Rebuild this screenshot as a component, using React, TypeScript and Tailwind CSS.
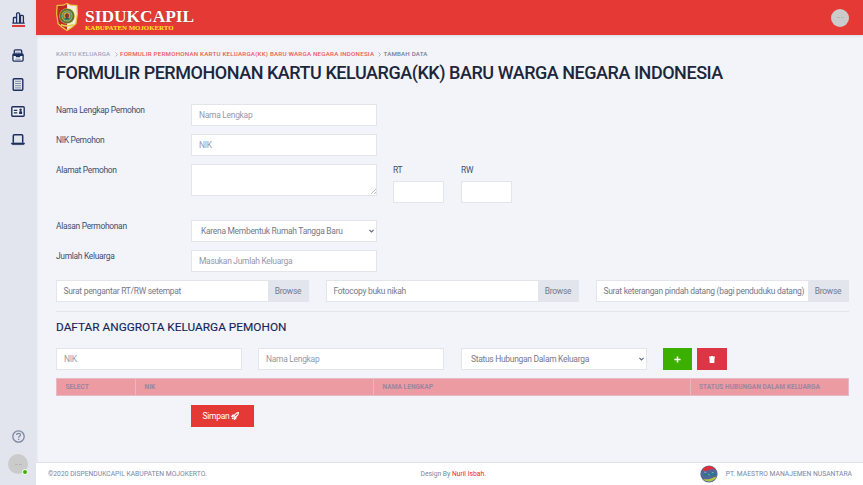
import React from "react";

const field =
  "block h-[22px] w-full appearance-none rounded-none border border-[#e2e5ec] bg-white px-[7px] text-[8.45px] tracking-[-0.28px] leading-[20px] text-[#74788d] outline-none placeholder:text-[#9498aa] placeholder:opacity-100";

function Label({ children }: { children: React.ReactNode }) {
  return <label className="w-[135px] shrink-0 pt-[1px] text-[8.45px] leading-[10px] tracking-[-0.31px] text-[#3f4d70]">{children}</label>;
}

function Select({ text }: { text: string }) {
  return (
    <div className="relative w-[186px] shrink-0">
      <select className={field + " pl-[9px]"} defaultValue={text}>
        <option>{text}</option>
      </select>
      <svg className="absolute right-[3px] top-[9px] h-[4px] w-[5px]" viewBox="0 0 5 4" fill="none" stroke="#5f6579" strokeWidth="1.1">
        <path d="M.4.8 2.5 2.9 4.6.8" />
      </svg>
    </div>
  );
}

function FileField({ text }: { text: string }) {
  return (
    <div className="flex h-[22px] w-[253px] border border-[#e2e5ec] bg-white text-[8.45px] leading-[20px] tracking-[-0.27px] text-[#74788d]">
      <span className="min-w-0 flex-1 whitespace-nowrap pl-[6.5px]">{text}</span>
      <span className="w-[40px] shrink-0 bg-[#e2e5ec] text-center">Browse</span>
    </div>
  );
}

function Crest() {
  return (
    <svg className="h-[30px] w-[24px]" viewBox="0 0 24 30">
      <path d="M12 .8 15.5 2.5 22.5 3 23 12 21.5 22 17 26 12 29.2 7 26 2.5 22 1 12 1.5 3 8.5 2.5Z" fill="#e4c53f" />
      <path d="M12 2 8.5 3.8 2.7 4 2.2 12 3.7 21.2 8 25 12 27.8Z" fill="#bd2825" />
      <path d="M12 2 15.5 3.8 21.3 4 21.8 12 20.3 21.2 16 25 12 27.8Z" fill="#f0eee2" />
      <circle cx="12" cy="14" r="7.8" fill="#d5b530" />
      <circle cx="12" cy="14" r="6.4" fill="none" stroke="#58723b" strokeWidth="1.8" />
      <circle cx="12" cy="14" r="4.8" fill="#3f9586" />
      <circle cx="12" cy="13.6" r="3.3" fill="#d9a343" />
      <circle cx="12" cy="13.8" r="2.3" fill="#a33a34" />
      <path d="M12 11.5v5M10 16.7h4" stroke="#33443f" strokeWidth="1" />
      <path d="M6 21.7q6 2.4 12 0v1.8q-6 2.4-12 0Z" fill="#e2cc56" />
    </svg>
  );
}

function Avatar({ className }: { className: string }) {
  return (
    <div className={"flex items-center justify-center rounded-full bg-[#cbcbcb] " + className}>
      <span className="flex gap-[1px]"><i className="h-[1px] w-[3px] bg-[#b7b7b7]" /><i className="h-[1px] w-[3px] bg-[#b7b7b7]" /></span>
    </div>
  );
}

function Sidebar() {
  return (
    <aside className="flex h-full w-[36px] shrink-0 flex-col items-center bg-[#e2e5ed] text-[#1c2f5e] shadow-[1px_0_2px_#dce0e8]">
      <svg className="mt-[12px] h-[12px] w-[13px]" viewBox="0 0 13 12" fill="none" stroke="currentColor" strokeWidth="1.3" strokeLinejoin="round">
        <path d="M.3 11.2h12.4M1.4 11V6.3q0-.8.8-.8h2.2M4.6 11V1.8q0-1 1-1h1q1 0 1 1V11M8.5 11V4q0-.6.6-.6h1.3q1 0 1 1V11" />
      </svg>
      <div className="mt-[1px] h-[2px] w-[13px] bg-[#e53935]" />
      <svg className="mt-[22px] h-[13px] w-[12px]" viewBox="0 0 12 13" fill="none" stroke="currentColor" strokeWidth="1.3" strokeLinejoin="round">
        <path d="M2.3 4.8V2q0-1.2 1.2-1.2h5q1.2 0 1.2 1.2v2.8" />
        <path d="M3.5 3.3h5" strokeWidth=".9" stroke="#8c97b2" />
        <rect x=".9" y="5" width="10.2" height="7.2" rx="1.1" fill="#f0f2f7" />
        <path d="M1 5h10v2H8.5l-.8 1.3H4.3L3.5 7H1Z" fill="currentColor" stroke="none" />
        <path d="M3.3 10.2h5.4" strokeWidth=".8" stroke="#64749b" />
      </svg>
      <svg className="mt-[16px] h-[13px] w-[12px]" viewBox="0 0 12 13" fill="none" stroke="currentColor" strokeWidth="1.4">
        <rect x="1.2" y=".8" width="9.6" height="11.4" rx="1" />
        <path d="M3 3.3h6M3 5.5h6M3 7.7h6M3 9.9h6" strokeWidth=".8" stroke="#64749b" />
      </svg>
      <svg className="mt-[15px] h-[11px] w-[14px]" viewBox="0 0 14 11" fill="none" stroke="currentColor" strokeWidth="1.4">
        <rect x=".8" y=".8" width="12.4" height="9.4" rx="1" fill="#f0f2f7" />
        <path d="M2.8 4.3h3.5M2.8 6.8h3.5" strokeWidth="1.2" />
        <circle cx="9.6" cy="3.8" r="1.2" fill="currentColor" stroke="none" />
        <path d="M8.1 7.9V6.3q0-1.3 1.5-1.3t1.5 1.3v1.6Z" fill="currentColor" stroke="none" />
      </svg>
      <svg className="mt-[17px] h-[12px] w-[14px]" viewBox="0 0 14 12" fill="none" stroke="currentColor" strokeWidth="1.5">
        <path d="M2.3 8.7V1.8q0-1 1-1h7.4q1 0 1 1v6.9" />
        <path d="M.5 9h13q0 1.6-1.2 1.6H1.7Q.5 10.6.5 9Z" strokeWidth=".7" fill="currentColor" />
      </svg>
      <svg className="mt-auto h-[13px] w-[13px] text-[#7d86a3]" viewBox="0 0 13 13" fill="none" stroke="currentColor" strokeWidth="1.3">
        <circle cx="6.5" cy="6.5" r="5.7" />
        <path d="M4.7 5.1q0-1.8 1.9-1.8t1.8 1.6q0 .8-.9 1.4t-.9 1.4M6.6 8.8v1.2" />
      </svg>
      <div className="relative mb-[11px] mt-[11px]">
        <Avatar className="h-[20px] w-[20px]" />
        <i className="absolute bottom-[-1px] right-[0.5px] h-[6px] w-[6px] rounded-full border border-white bg-[#3bb001]" />
      </div>
    </aside>
  );
}

function Chevron() {
  return (
    <svg className="h-[5px] w-[3px] shrink-0" viewBox="0 0 3 5" fill="none" stroke="#9fa6b9" strokeWidth=".8">
      <path d="m.5.5 2 2-2 2" />
    </svg>
  );
}

export default function App() {
  return (
    <div className="flex h-[485px] w-[863px] overflow-hidden bg-[#f3f4f9] font-[Roboto,sans-serif]">
      <Sidebar />
      <div className="flex min-w-0 flex-1 flex-col">
        <header className="flex h-[35px] shrink-0 items-start justify-between bg-[#e53935] pl-[19px] pr-[14px] shadow-[0_1px_3px_#d5d8e2]">
          <div className="flex pt-[2px]">
            <Crest />
            <div className="ml-[6px] whitespace-nowrap pt-[7px] font-['Liberation_Serif',serif] font-bold">
              <div className="h-[15px] text-[17.4px] leading-[15px] text-white [text-shadow:0_0_1px_#7d3b3b]">SIDUKCAPIL</div>
              <div className="text-[6.85px] leading-[7px] text-[#ffed16]">KABUPATEN MOJOKERTO</div>
            </div>
          </div>
          <Avatar className="mt-[8.5px] h-[18px] w-[18px]" />
        </header>

        <main className="h-[427px] pl-[20px] pr-[14px]">
          <nav className="mt-[14px] flex h-[10px] items-center whitespace-nowrap text-[6.2px] font-medium leading-[10px] text-[#9fa6b9]">
            <span className="w-[59px] tracking-[0.17px]">KARTU KELUARGA</span>
            <Chevron />
            <span className="ml-[2px] w-[257.5px] tracking-[0.22px] text-[#ed5754]">FORMULIR PERMOHONAN KARTU KELUARGA(KK) BARU WARGA NEGARA INDONESIA</span>
            <Chevron />
            <span className="ml-[3px] tracking-[0.17px] text-[#727b91]">TAMBAH DATA</span>
          </nav>
          <h1 className="mt-[3px] h-[22px] whitespace-nowrap text-[18px] font-medium leading-[22px] tracking-[-0.462px] text-[#1c273c]">FORMULIR PERMOHONAN KARTU KELUARGA(KK) BARU WARGA NEGARA INDONESIA</h1>

          <div className="mt-[20px] flex h-[30px]"><Label>Nama Lengkap Pemohon</Label><div className="w-[186px]"><input className={field} placeholder="Nama Lengkap" /></div></div>
          <div className="flex h-[30px]"><Label>NIK Pemohon</Label><div className="w-[186px]"><input className={field} placeholder="NIK" /></div></div>
          <div className="flex h-[56px]">
            <Label>Alamat Pemohon</Label>
            <div className="relative h-[32px] w-[186px] shrink-0">
              <textarea className="block h-full w-full resize-none border border-[#e2e5ec] bg-white outline-none" />
              <svg className="absolute bottom-[2px] right-[1px] h-[5px] w-[5px]" viewBox="0 0 5 5" stroke="#9da1ab" strokeWidth=".7"><path d="m0 5 5-5M3 5l2-2" /></svg>
            </div>
            <div className="ml-[16px] w-[51px] pt-[1px] text-[8.45px] leading-[10px] tracking-[-0.28px] text-[#3f4d70]"><label className="block">RT</label><input className={field + " mt-[6px]"} /></div>
            <div className="ml-[17px] w-[51px] pt-[1px] text-[8.45px] leading-[10px] tracking-[-0.28px] text-[#3f4d70]"><label className="block">RW</label><input className={field + " mt-[6px]"} /></div>
          </div>
          <div className="flex h-[30px]"><Label>Alasan Permohonan</Label><Select text="Karena Membentuk Rumah Tangga Baru" /></div>
          <div className="flex h-[30px]"><Label>Jumlah Keluarga</Label><div className="w-[186px]"><input className={field} placeholder="Masukan Jumlah Keluarga" /></div></div>
          <div className="flex justify-between">
            <FileField text="Surat pengantar RT/RW setempat" />
            <FileField text="Fotocopy buku nikah" />
            <FileField text="Surat keterangan pindah datang (bagi penduduku datang)" />
          </div>
          <div className="mt-[9px] h-[1px] bg-[#e2e5ec]" />
          <h2 className="mt-[8px] h-[14px] whitespace-nowrap text-[11.8px] leading-[14px] tracking-[0.02px] text-[#14275a] [-webkit-text-stroke:0.15px_#14275a]">DAFTAR ANGGROTA KELUARGA PEMOHON</h2>
          <div className="mt-[14px] flex">
            <div className="w-[186px]"><input className={field} placeholder="NIK" /></div>
            <div className="ml-[16px] mr-[17px] w-[186px]"><input className={field} placeholder="Nama Lengkap" /></div>
            <Select text="Status Hubungan Dalam Keluarga" />
            <button className="ml-[16px] flex h-[22px] w-[29px] items-center justify-center bg-[#3bb001]">
              <svg className="h-[7px] w-[7px]" viewBox="0 0 7 7" stroke="white" strokeWidth="1.5"><path d="M3.5.4v6.2M.4 3.5h6.2" /></svg>
            </button>
            <button className="ml-[5px] flex h-[22px] w-[30px] items-center justify-center bg-[#dc3545]">
              <svg className="h-[7px] w-[6px]" viewBox="0 0 6 7" fill="white"><path d="M0 .6h1.7L2.2 0h1.6l.5.6H6v1H0ZM.4 1.6h5.2L5.3 7H.7Z" /></svg>
            </button>
          </div>
          <div className="mt-[8px] flex h-[18px] border border-[#e6b9c5] bg-[#ed9ba3] text-[6.6px] font-bold leading-[17px] tracking-[0.01px] text-[#9b86a0]">
            <span className="w-[79px] border-r border-[#e8b7c1] pl-[8.5px]">SELECT</span>
            <span className="w-[238px] border-r border-[#e8b7c1] pl-[8.5px]">NIK</span>
            <span className="w-[317px] border-r border-[#e8b7c1] pl-[8.5px]">NAMA LENGKAP</span>
            <span className="whitespace-nowrap pl-[8px]">STATUS HUBUNGAN DALAM KELUARGA</span>
          </div>
          <button className="ml-[135px] mt-[9px] flex h-[22px] w-[63px] items-center bg-[#e53935] pl-[11.5px] text-[8.45px] tracking-[-0.25px] text-white">
            Simpan
            <svg className="ml-[2px] h-[8px] w-[8px]" viewBox="0 0 8 8" fill="none" stroke="white" strokeWidth="1.1">
              <path d="m2.8 4.2 2.3-2.8Q6 .6 7.4.6q.1 1.5-.7 2.4L3.9 5.6Z" />
              <path d="M3.3 3.1H1.8L.7 4.5l1.6.5M4.9 4.5v1.7L3.4 7.4l-.5-1.6M1 7l1.4-1.4" />
            </svg>
          </button>
        </main>
        <footer className="flex h-[23px] items-center whitespace-nowrap border-t border-[#dfe3eb] bg-white pl-[12px] text-[6.75px] leading-[22px] text-[#7987a1]">
          <span className="w-[372.5px]">©2020 DISPENDUKCAPIL KABUPATEN MOJOKERTO.</span>
          <span>Design By <span className="text-[#fa1d26]">Nuril Isbah</span>.</span>
          <div className="ml-auto flex items-center pr-[11px]">
            <svg className="mr-[8px] h-[18px] w-[18px]" viewBox="0 0 18 18">
              <circle cx="9" cy="9" r="8.6" fill="#52669b" />
              <path d="M2.3 5Q5 .7 9.5 .9q4.2.4 6.3 4Q12 3.1 9.1 4.8 6.1 6.8 2.3 5Z" fill="#e12e36" />
              <path d="M3 14q4.8.7 7.5-.2 3.1-1.2 6.2-2.2-2.1 4.2-6.5 4.9Q5.7 17 3 14Z" fill="#b0c93b" />
              <path d="m1.5 9.5 2.5-1.2 3 .6 1.4-1.5 2 .7 2.4-.8 3.4 1-1.1 1.9-2-.2-1.2 1.3-2-.9-2 .8-3.2-.4Z" fill="#287889" />
              <path d="m4.2 7.2 2 .2m1.7 2.1 1.8.5m2.2-2.3 1.7-.4" stroke="#b2bdd7" strokeWidth=".7" />
            </svg>
            <span>PT. MAESTRO MANAJEMEN NUSANTARA</span>
          </div>
        </footer>
      </div>
    </div>
  );
}
